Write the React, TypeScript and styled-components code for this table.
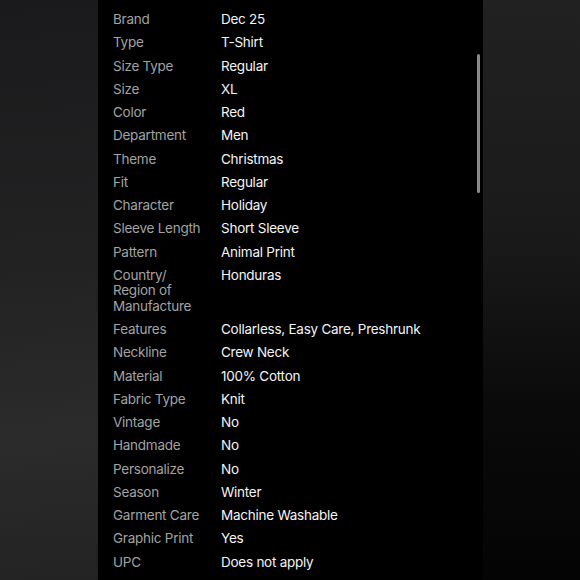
import React from 'react';
import styled, { createGlobalStyle } from 'styled-components';

const GlobalStyle = createGlobalStyle`
  html, body {
    margin: 0;
    padding: 0;
    background: #000;
  }
  body {
    font-family: Inter, "Noto Sans", "Liberation Sans", sans-serif;
    -webkit-font-smoothing: antialiased;
  }
`;

const Screen = styled.div`
  display: grid;
  grid-template-columns: 98px 385px 1fr;
  width: 580px;
  height: 580px;
  overflow: hidden;
`;

const Side = styled.div<{ $side: 'left' | 'right' }>`
  background: ${({ $side }) =>
    $side === 'left'
      ? 'linear-gradient(175deg, #1a1a1c 0%, #222223 45%, #2b2b2b 75%, #232323 100%)'
      : 'linear-gradient(180deg, #212121 0%, #1a1a1a 40%, #0a0a0a 70%, #040404 100%)'};
`;

const Panel = styled.div`
  position: relative;
  background: #000;
  padding: 12px 0 0 15px;
`;

const SpecList = styled.dl`
  display: grid;
  grid-template-columns: 96px 1fr;
  column-gap: 12px;
  row-gap: 7.75px;
  margin: 0;
  font-size: 13.5px;
  line-height: 15.5px;
  letter-spacing: -0.25px;
`;

const Label = styled.dt`
  color: #a3a3a3;
  margin: 0;
`;

const Value = styled.dd`
  color: #f4f4f4;
  margin: 0;
`;

const ScrollThumb = styled.div`
  position: absolute;
  right: 3px;
  top: 54px;
  width: 3px;
  height: 139px;
  border-radius: 2px;
  background: #8a8a8a;
`;

const specs: [string, string][] = [
  ['Brand', 'Dec 25'],
  ['Type', 'T-Shirt'],
  ['Size Type', 'Regular'],
  ['Size', 'XL'],
  ['Color', 'Red'],
  ['Department', 'Men'],
  ['Theme', 'Christmas'],
  ['Fit', 'Regular'],
  ['Character', 'Holiday'],
  ['Sleeve Length', 'Short Sleeve'],
  ['Pattern', 'Animal Print'],
  ['Country/ Region of Manufacture', 'Honduras'],
  ['Features', 'Collarless, Easy Care, Preshrunk'],
  ['Neckline', 'Crew Neck'],
  ['Material', '100% Cotton'],
  ['Fabric Type', 'Knit'],
  ['Vintage', 'No'],
  ['Handmade', 'No'],
  ['Personalize', 'No'],
  ['Season', 'Winter'],
  ['Garment Care', 'Machine Washable'],
  ['Graphic Print', 'Yes'],
  ['UPC', 'Does not apply'],
];

export default function App() {
  return (
    <>
      <GlobalStyle />
      <Screen>
        <Side $side="left" />
        <Panel>
          <SpecList>
            {specs.map(([label, value]) => (
              <React.Fragment key={label}>
                <Label>{label}</Label>
                <Value>{value}</Value>
              </React.Fragment>
            ))}
          </SpecList>
          <ScrollThumb />
        </Panel>
        <Side $side="right" />
      </Screen>
    </>
  );
}
